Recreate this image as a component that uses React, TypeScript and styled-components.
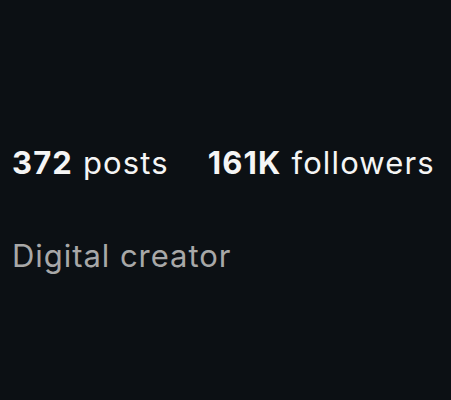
import React from "react";
import styled, { createGlobalStyle } from "styled-components";

const Global = createGlobalStyle`
  html, body { margin: 0; padding: 0; background: #0c1014; }
  body { font-family: Inter, "Helvetica Neue", Arial, sans-serif; }
`;

const Page = styled.div`
  width: 451px;
  height: 400px;
  background: #0c1014;
  box-sizing: border-box;
  padding: 141px 0 0 12px;
  display: flex;
  flex-direction: column;
  gap: 49px;
  overflow: hidden;
`;

const Stats = styled.div`
  display: flex;
  gap: 39px;
  white-space: nowrap;
`;

const Stat = styled.div`
  font-size: 31px;
  line-height: 44px;
  color: #f5f5f5;
  font-weight: 400;
  letter-spacing: 1.15px;
`;

const Num = styled.span`
  font-weight: 700;
`;

const Category = styled.div`
  font-size: 31px;
  line-height: 44px;
  color: #a8a8a8;
  letter-spacing: 0.95px;
`;

export default function App() {
  return (
    <>
      <Global />
      <Page>
        <Stats>
          <Stat><Num>372</Num> posts</Stat>
          <Stat><Num>161K</Num> followers</Stat>
        </Stats>
        <Category>Digital creator</Category>
      </Page>
    </>
  );
}
